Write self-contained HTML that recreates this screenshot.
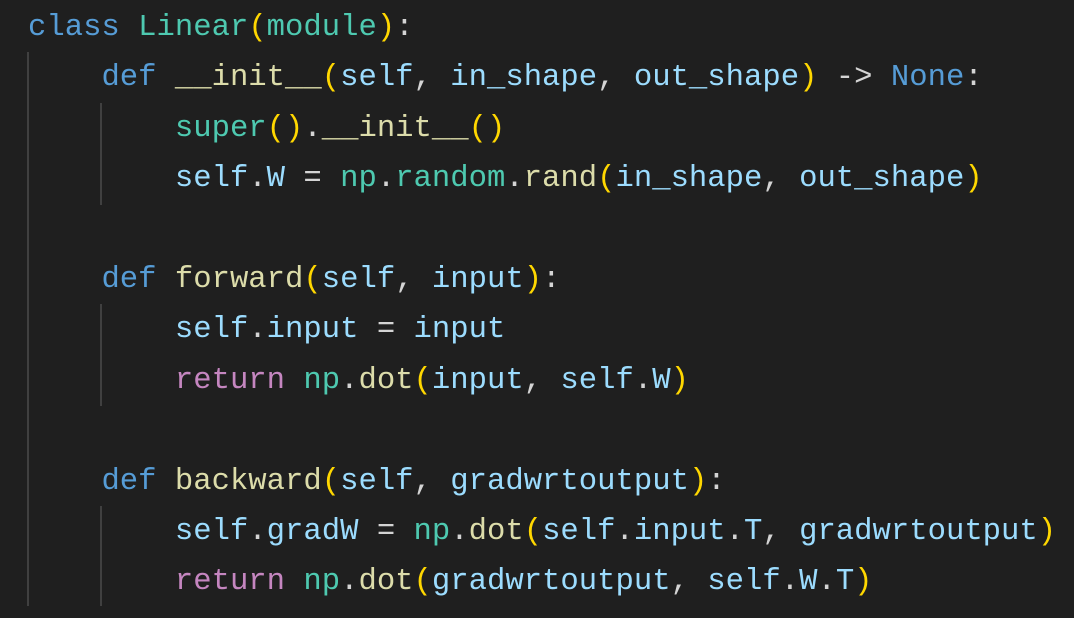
<html><head><style>
body{margin:0;width:1074px;height:618px;background:#1f1f1f;overflow:hidden;position:relative}
pre{margin:0;position:absolute;left:28px;top:3px;font-family:"Liberation Mono",monospace;font-size:30.6px;line-height:50.4px;color:#d4d4d4}
.k{color:#569cd6}.c{color:#4ec9b0}.p{color:#ffd700}.f{color:#dcdcaa}.v{color:#9cdcfe}.r{color:#c586c0}
.g{position:absolute;width:2px;background:#404040}
</style></head><body>
<div class="g" style="left:27px;top:52px;height:554px"></div>
<div class="g" style="left:100px;top:103px;height:102px"></div>
<div class="g" style="left:100px;top:304px;height:102px"></div>
<div class="g" style="left:100px;top:506px;height:100px"></div>
<pre><span class="k">class</span> <span class="c">Linear</span><span class="p">(</span><span class="c">module</span><span class="p">)</span>:
    <span class="k">def</span> <span class="f">__init__</span><span class="p">(</span><span class="v">self</span>, <span class="v">in_shape</span>, <span class="v">out_shape</span><span class="p">)</span> -&gt; <span class="k">None</span>:
        <span class="c">super</span><span class="p">()</span>.<span class="f">__init__</span><span class="p">()</span>
        <span class="v">self</span>.<span class="v">W</span> = <span class="c">np</span>.<span class="c">random</span>.<span class="f">rand</span><span class="p">(</span><span class="v">in_shape</span>, <span class="v">out_shape</span><span class="p">)</span>

    <span class="k">def</span> <span class="f">forward</span><span class="p">(</span><span class="v">self</span>, <span class="v">input</span><span class="p">)</span>:
        <span class="v">self</span>.<span class="v">input</span> = <span class="v">input</span>
        <span class="r">return</span> <span class="c">np</span>.<span class="f">dot</span><span class="p">(</span><span class="v">input</span>, <span class="v">self</span>.<span class="v">W</span><span class="p">)</span>

    <span class="k">def</span> <span class="f">backward</span><span class="p">(</span><span class="v">self</span>, <span class="v">gradwrtoutput</span><span class="p">)</span>:
        <span class="v">self</span>.<span class="v">gradW</span> = <span class="c">np</span>.<span class="f">dot</span><span class="p">(</span><span class="v">self</span>.<span class="v">input</span>.<span class="v">T</span>, <span class="v">gradwrtoutput</span><span class="p">)</span>
        <span class="r">return</span> <span class="c">np</span>.<span class="f">dot</span><span class="p">(</span><span class="v">gradwrtoutput</span>, <span class="v">self</span>.<span class="v">W</span>.<span class="v">T</span><span class="p">)</span></pre>
</body></html>
